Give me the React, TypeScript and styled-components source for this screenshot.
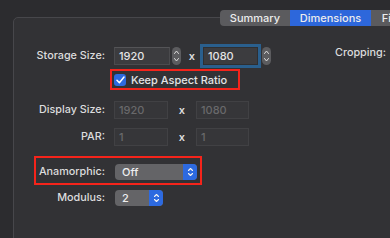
import React from 'react'
import styled, { createGlobalStyle, css } from 'styled-components'

const GlobalStyle = createGlobalStyle`
  html, body {
    margin: 0;
    padding: 0;
    background: #2c2c2f;
  }
  body {
    font-family: Inter, "Liberation Sans", sans-serif;
    -webkit-font-smoothing: antialiased;
  }
`

const Window = styled.div`
  width: 390px;
  height: 238px;
  overflow: hidden;
  padding-top: 10px;
  box-sizing: border-box;
  background: #2c2c2f;
`

const TabBar = styled.div`
  position: relative;
  z-index: 1;
  display: flex;
  width: 205px;
  height: 16px;
  margin-left: 220px;
  background: #5b5b5e;
  border-radius: 4px;
  overflow: hidden;
`

const Tab = styled.div<{ $active?: boolean; $width: number }>`
  flex: none;
  width: ${p => p.$width}px;
  display: flex;
  align-items: center;
  justify-content: center;
  font-size: 11px;
  font-weight: 500;
  color: #ececed;
  background: ${p => (p.$active ? '#2d67db' : 'transparent')};
`

const Panel = styled.div`
  width: 480px;
  height: 260px;
  margin: -9px 0 0 13px;
  padding-top: 29px;
  box-sizing: border-box;
  display: flex;
  flex-direction: column;
  border: 1px solid #47474b;
  border-radius: 5px;
  background: #323235;
`

const Row = styled.div<{ $gap?: number }>`
  display: flex;
  align-items: center;
  margin-top: ${p => p.$gap ?? 0}px;
`

const HighlightRow = styled(Row)`
  align-self: flex-start;
  margin-left: 20px;
  padding: 6px 3px 3px 0;
  border: 2px solid #f5241b;
`

const Label = styled.div<{ $width?: number }>`
  flex: none;
  width: ${p => p.$width ?? 91}px;
  margin-right: 9px;
  text-align: right;
  font-size: 10.8px;
  font-weight: 500;
  line-height: 14px;
  color: #dcdcdd;
`

const SideLabel = styled(Label)`
  width: auto;
  margin: -6px 0 0 64px;
  text-align: left;
`

const Field = styled.div<{ $width: number; $disabled?: boolean; $focused?: boolean }>`
  flex: none;
  width: ${p => p.$width}px;
  height: 18px;
  box-sizing: border-box;
  padding: 0 4px;
  display: flex;
  align-items: center;
  font-size: 11px;
  font-weight: 500;
  color: #e4e4e5;
  background: #3c3c3f;
  border: 1px solid #4b4b4e;
  border-top-color: #545457;
  ${p =>
    p.$disabled &&
    css`
      color: #69696b;
      background: #363639;
      border-color: #414144;
    `}
  ${p =>
    p.$focused &&
    css`
      border-color: #2f2f31;
      box-shadow: 0 0 0 3px #2a5f8d;
    `}
`

const Times = styled.span<{ $width: number }>`
  flex: none;
  width: ${p => p.$width}px;
  text-align: center;
  font-size: 11px;
  font-weight: 600;
  color: #dcdcdd;
`

const StepperBox = styled.div<{ $gap?: number }>`
  flex: none;
  width: 9px;
  height: 18px;
  margin-left: ${p => p.$gap ?? 2}px;
  border-radius: 4.5px;
  background: #5c5c5f;
  display: flex;
  align-items: center;
  justify-content: center;
`

const CheckHighlight = styled.div`
  display: flex;
  align-items: center;
  gap: 5px;
  height: 21px;
  box-sizing: border-box;
  margin: 4px 0 0 96px;
  padding: 0 11px 0 2px;
  align-self: flex-start;
  border: 2px solid #f5241b;
`

const CheckBox = styled.div`
  width: 12px;
  height: 12px;
  border-radius: 3px;
  background: #2d6ae0;
  display: flex;
  align-items: center;
  justify-content: center;
`

const CheckText = styled.span`
  font-size: 11px;
  font-weight: 500;
  color: #e4e4e5;
`

const Popup = styled.div<{ $width: number }>`
  flex: none;
  width: ${p => p.$width}px;
  height: 16px;
  margin-left: 1px;
  display: flex;
  border-radius: 4px;
  overflow: hidden;
  background: #646467;
`

const PopupValue = styled.span`
  flex: 1;
  padding-left: 7px;
  font-size: 11px;
  font-weight: 500;
  line-height: 16px;
  color: #eeeeef;
`

const PopupArrows = styled.div`
  width: 14px;
  background: #2d6ae0;
  display: flex;
  align-items: center;
  justify-content: center;
`

const UpDown = ({ height }: { height: number }) => (
  <svg width="7" height={height} viewBox={`0 0 7 ${height}`} fill="none" stroke="#f2f2f2" strokeWidth="1.1" strokeLinecap="round" strokeLinejoin="round">
    <path d={`M1.5 ${height / 2 - 1.5} L3.5 ${height / 2 - 3.5} L5.5 ${height / 2 - 1.5}`} />
    <path d={`M1.5 ${height / 2 + 1.5} L3.5 ${height / 2 + 3.5} L5.5 ${height / 2 + 1.5}`} />
  </svg>
)

const Stepper = ({ gap }: { gap?: number }) => (
  <StepperBox $gap={gap}>
    <svg width="7" height="18" viewBox="0 0 7 18" fill="none" stroke="#dedede" strokeWidth="1" strokeLinecap="round" strokeLinejoin="round">
      <path d="M1.5 6.5 L3.5 4 L5.5 6.5" />
      <path d="M1.5 11.5 L3.5 14 L5.5 11.5" />
    </svg>
  </StepperBox>
)

const Check = () => (
  <svg width="9" height="8" viewBox="0 0 9 8" fill="none" stroke="#ffffff" strokeWidth="1.5" strokeLinecap="round" strokeLinejoin="round">
    <path d="M1 4.3 L3.4 6.7 L8 1" />
  </svg>
)

const Select = ({ value, width }: { value: string; width: number }) => (
  <Popup $width={width}>
    <PopupValue>{value}</PopupValue>
    <PopupArrows>
      <UpDown height={16} />
    </PopupArrows>
  </Popup>
)

export default function App() {
  return (
    <Window>
      <GlobalStyle />
      <TabBar>
        <Tab $width={70}>Summary</Tab>
        <Tab $width={81} $active>
          Dimensions
        </Tab>
        <Tab $width={54}>Filters</Tab>
      </TabBar>

      <Panel>
        <Row>
          <Label>Storage Size:</Label>
          <Field $width={56}>1920</Field>
          <Stepper />
          <Times $width={22}>x</Times>
          <Field $width={55} $focused>
            1080
          </Field>
          <Stepper gap={4} />
          <SideLabel>Cropping:</SideLabel>
        </Row>

        <CheckHighlight>
          <CheckBox>
            <Check />
          </CheckBox>
          <CheckText>Keep Aspect Ratio</CheckText>
        </CheckHighlight>

        <Row $gap={11}>
          <Label>Display Size:</Label>
          <Field $width={54} $disabled>
            1920
          </Field>
          <Times $width={28}>x</Times>
          <Field $width={53} $disabled>
            1080
          </Field>
        </Row>

        <Row $gap={9}>
          <Label>PAR:</Label>
          <Field $width={54} $disabled>
            1
          </Field>
          <Times $width={28}>x</Times>
          <Field $width={53} $disabled>
            1
          </Field>
        </Row>

        <HighlightRow $gap={10}>
          <Label $width={69}>Anamorphic:</Label>
          <Select value="Off" width={82} />
        </HighlightRow>

        <Row $gap={5}>
          <Label>Modulus:</Label>
          <Select value="2" width={48} />
        </Row>
      </Panel>
    </Window>
  )
}
